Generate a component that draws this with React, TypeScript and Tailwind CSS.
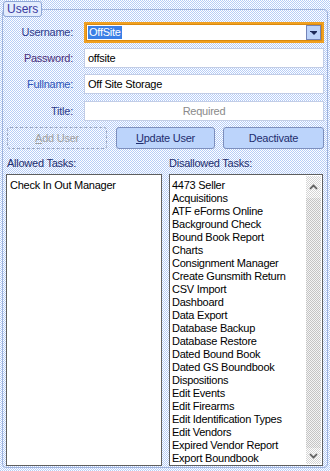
const disallowed = [
  "4473 Seller",
  "Acquisitions",
  "ATF eForms Online",
  "Background Check",
  "Bound Book Report",
  "Charts",
  "Consignment Manager",
  "Create Gunsmith Return",
  "CSV Import",
  "Dashboard",
  "Data Export",
  "Database Backup",
  "Database Restore",
  "Dated Bound Book",
  "Dated GS Boundbook",
  "Dispositions",
  "Edit Events",
  "Edit Firearms",
  "Edit Identification Types",
  "Edit Vendors",
  "Expired Vendor Report",
  "Export Boundbook",
];

function Label({ text, color }: { text: string; color: string }) {
  return (
    <div className={`w-[68px] shrink-0 text-right pr-[2px] ${color}`}>{text}</div>
  );
}

export default function App() {
  return (
    <div
      className="w-[330px] h-[471px] overflow-hidden bg-[repeating-conic-gradient(#ffffff_0%_25%,#b6cdf7_0%_50%)] [background-size:2px_2px] text-[11px] leading-[13px] tracking-[-0.25px] text-black"
      style={{ fontFamily: '"Liberation Sans", Arial, sans-serif' }}
    >
      <div className="relative pt-[9px] pl-[2px] pr-[2px] pb-[3px] h-full">
        {/* group box */}
        <div className="h-full border border-[#9fb3dc] rounded-[4px] pt-[12px] pl-[4px] pr-[3px] pb-[1px] flex flex-col">
          <div className="flex items-center h-[21px]">
            <Label text="Username:" color="text-[#2e3b8c]" />
            <div className="ml-[9px] flex-1 h-[21px] border-2 border-[#f0a020] bg-white flex items-center pl-[2px] pr-[1px] shadow-[inset_0_0_0_1px_#d98a10]">
              <span className="bg-[#3a7fe6] text-white px-[1px] leading-[13px]">OffSite</span>
              <div className="ml-auto w-[15px] h-[15px] border border-[#7384b8] bg-[#bcd3fa] flex flex-col items-center justify-center">
                <div className="w-[7px] h-[1px] bg-[#1c2a5a]" />
                <div className="w-0 h-0 border-l-[3px] border-r-[3px] border-t-[3px] border-l-transparent border-r-transparent border-t-[#1c2a5a]" />
              </div>
            </div>
          </div>
          <div className="flex items-center h-[20px] mt-[5px]">
            <Label text="Password:" color="text-[#4a2d7a]" />
            <div className="ml-[9px] flex-1 h-[20px] border border-[#c2cde6] bg-white flex items-center pl-[3px]">
              offsite
            </div>
          </div>
          <div className="flex items-center h-[20px] mt-[6px]">
            <Label text="Fullname:" color="text-[#2f55b8]" />
            <div className="ml-[9px] flex-1 h-[20px] border border-[#c2cde6] bg-white flex items-center pl-[3px]">
              Off Site Storage
            </div>
          </div>
          <div className="flex items-center h-[20px] mt-[7px]">
            <Label text="Title:" color="text-[#2e3b8c]" />
            <div className="ml-[9px] flex-1 h-[20px] border border-[#c2cde6] bg-white flex items-center justify-center text-[#8a8a8a]">
              Required
            </div>
          </div>

          <div className="flex mt-[6px] h-[22px]">
            <div className="w-[100px] border border-dashed border-[#9aa6c2] rounded-[3px] flex items-center justify-center text-[#a0a0a0]">
              <span><u>A</u>dd User</span>
            </div>
            <div className="ml-[9px] w-[99px] border border-[#7d8fbd] rounded-[3px] bg-[#bcd4fb] flex items-center justify-center text-[#1e2d6e]">
              <span><u>U</u>pdate User</span>
            </div>
            <div className="ml-[8px] flex-1 border border-[#7d8fbd] rounded-[3px] bg-[#bcd4fb] flex items-center justify-center text-[#1e2d6e]">
              Deactivate
            </div>
          </div>

          <div className="flex mt-[8px] -ml-[1px] flex-1 min-h-0">
            <div className="flex flex-col w-[156px]">
              <div className="text-[#1e2d6e] h-[13px] pl-[1px]">Allowed Tasks:</div>
              <div className="mt-[4px] flex-1 border border-[#5e5e5e] bg-white pl-[3px] pt-[4px]">
                <div className="h-[13px]">Check In Out Manager</div>
              </div>
            </div>
            <div className="flex flex-col flex-1 ml-[7px]">
              <div className="text-[#1e2d6e] h-[13px]">Disallowed Tasks:</div>
              <div className="mt-[4px] flex-1 border border-[#5e5e5e] bg-white flex min-h-0 mr-[1px]">
                <div className="flex-1 pl-[2px] pt-[4px] overflow-hidden">
                  {disallowed.map((t) => (
                    <div key={t} className="h-[13px] whitespace-nowrap">
                      {t}
                    </div>
                  ))}
                </div>
                <div className="w-[15px] my-[1px] mr-[1px] flex flex-col">
                  <div className="h-[22px] bg-[repeating-conic-gradient(#ffffff_0%_25%,#d4d4d4_0%_50%)] [background-size:2px_2px] flex items-center justify-center">
                    <svg width="9" height="6" viewBox="0 0 9 6">
                      <path d="M1 5 L4.5 1.5 L8 5" stroke="#555" strokeWidth="1.6" fill="none" />
                    </svg>
                  </div>
                  <div className="flex-1 bg-[repeating-conic-gradient(#f4f4f4_0%_25%,#c4c4c4_0%_50%)] [background-size:2px_2px]" />
                  <div className="h-[16px] bg-[repeating-conic-gradient(#ffffff_0%_25%,#d4d4d4_0%_50%)] [background-size:2px_2px] flex items-center justify-center">
                    <svg width="9" height="6" viewBox="0 0 9 6">
                      <path d="M1 1 L4.5 4.5 L8 1" stroke="#555" strokeWidth="1.6" fill="none" />
                    </svg>
                  </div>
                </div>
              </div>
            </div>
          </div>
        </div>
        {/* legend tab */}
        <div className="absolute left-[3px] top-[1px] h-[16px] px-[3px] border border-[#8ea6d6] rounded-[3px] bg-[#e3ecfd] text-[#3a3aa0] text-[12px] leading-[14px] tracking-normal">
          Users
        </div>
      </div>
    </div>
  );
}
